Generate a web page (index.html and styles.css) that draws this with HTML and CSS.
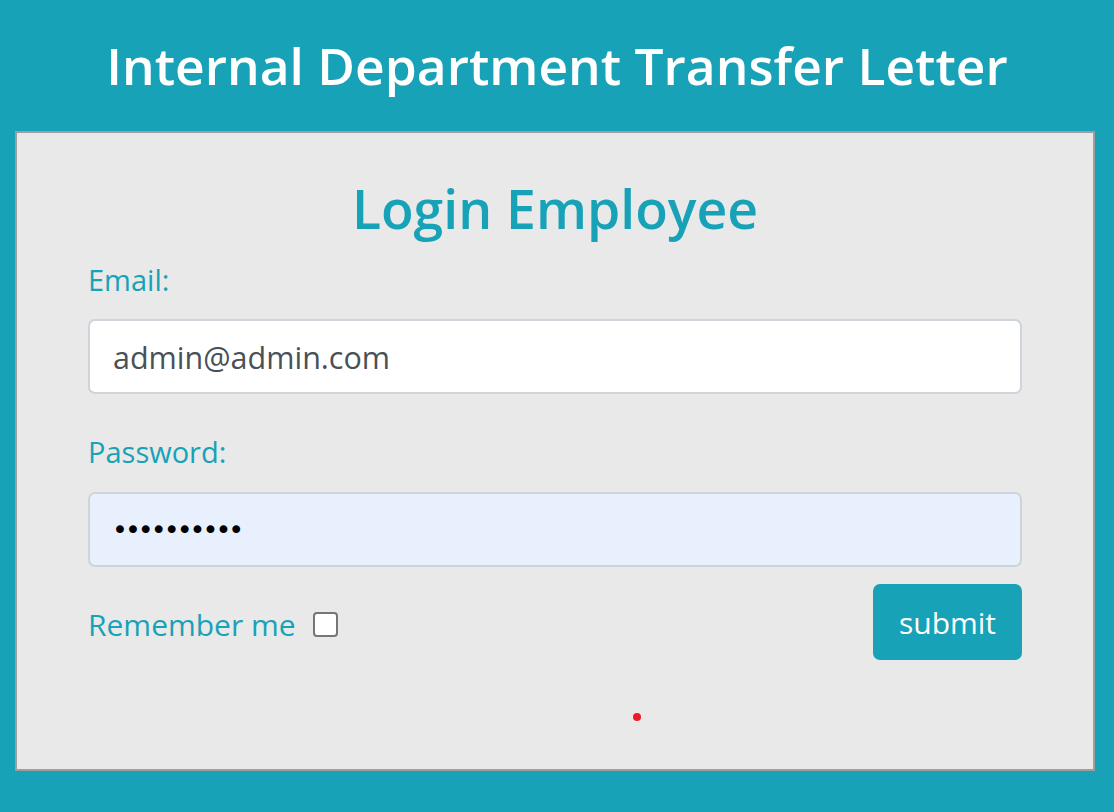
FILE: index.html
```html
<!DOCTYPE html>
<html>
<head>
<meta charset="utf-8">
<link rel="stylesheet" href="styles.css">
</head>
<body>
<header class="top">
  <h1 class="title">Internal Department Transfer Letter</h1>
</header>
<main class="card">
  <h2 class="heading">Login Employee</h2>
  <form class="form">
    <label class="label" for="email">Email:</label>
    <input class="field field-email" id="email" type="text" value="admin@admin.com">
    <label class="label label-pass" for="pass">Password:</label>
    <div class="field field-auto" id="pass"><span class="dots">••••••••••</span></div>
    <div class="row">
      <label class="remember">Remember me <span class="check"></span></label>
      <button class="submit" type="button">submit</button>
    </div>
  </form>
  <div class="dot-wrap"><span class="red-dot"></span></div>
</main>
</body>
</html>
```
FILE: styles.css
```css
html, body {
  margin: 0;
  padding: 0;
}
body {
  background: #17a2b8;
  font-family: "Open Sans", "Noto Sans", sans-serif;
  width: 1114px;
  height: 812px;
  overflow: hidden;
}
.top {
  height: 131px;
  display: flex;
  align-items: center;
  justify-content: center;
}
.title {
  margin: 0;
  color: #fff;
  font-size: 51.5px;
  font-weight: 600;
  line-height: 1;
}
.card {
  margin: 0 19px 0 15px;
  height: 636px;
  background: #e9e9e9;
  border: 2px solid #9e9e9e;
  padding: 0 71px;
  box-sizing: content-box;
}
.heading {
  margin: 46px 0 0;
  text-align: center;
  color: #17a2b8;
  font-size: 53.5px;
  font-weight: 600;
  line-height: 60px;
}
.form {
  display: flex;
  flex-direction: column;
}
.label {
  color: #17a2b8;
  font-size: 29px;
  line-height: 36px;
  margin-top: 23px;
}
.label-pass {
  margin-top: 40px;
}
.field {
  box-sizing: border-box;
  height: 75px;
  margin-top: 22px;
  border: 2px solid #ced4da;
  border-radius: 7px;
  background: #fff;
  font-family: inherit;
  font-size: 30.5px;
  color: #495057;
  padding: 0 23px;
  outline: none;
}
.field-email {
  margin-top: 21px;
}
.field-auto {
  background: #e8f0fe;
  display: flex;
  align-items: center;
  color: #000;
  padding: 0 22px;
}
.dots {
  font-family: "DejaVu Sans", sans-serif;
  font-size: 27px;
  letter-spacing: -3px;
}
.row {
  display: flex;
  justify-content: space-between;
  align-items: center;
  margin-top: 17px;
}
.remember {
  color: #17a2b8;
  font-size: 30px;
  display: flex;
  align-items: center;
  gap: 17px;
  padding-top: 4px;
}
.check {
  width: 21px;
  height: 21px;
  border: 2px solid #767676;
  border-radius: 4px;
  background: #fff;
}
.submit {
  width: 149px;
  height: 76px;
  border: none;
  border-radius: 7px;
  background: #17a2b8;
  color: #fff;
  font-family: inherit;
  font-size: 30px;
  padding: 0;
}
.dot-wrap {
  display: flex;
  justify-content: center;
  padding-left: 164px;
  margin-top: 53px;
}
.red-dot {
  width: 8px;
  height: 8px;
  border-radius: 50%;
  background: #ed1c24;
}
```
